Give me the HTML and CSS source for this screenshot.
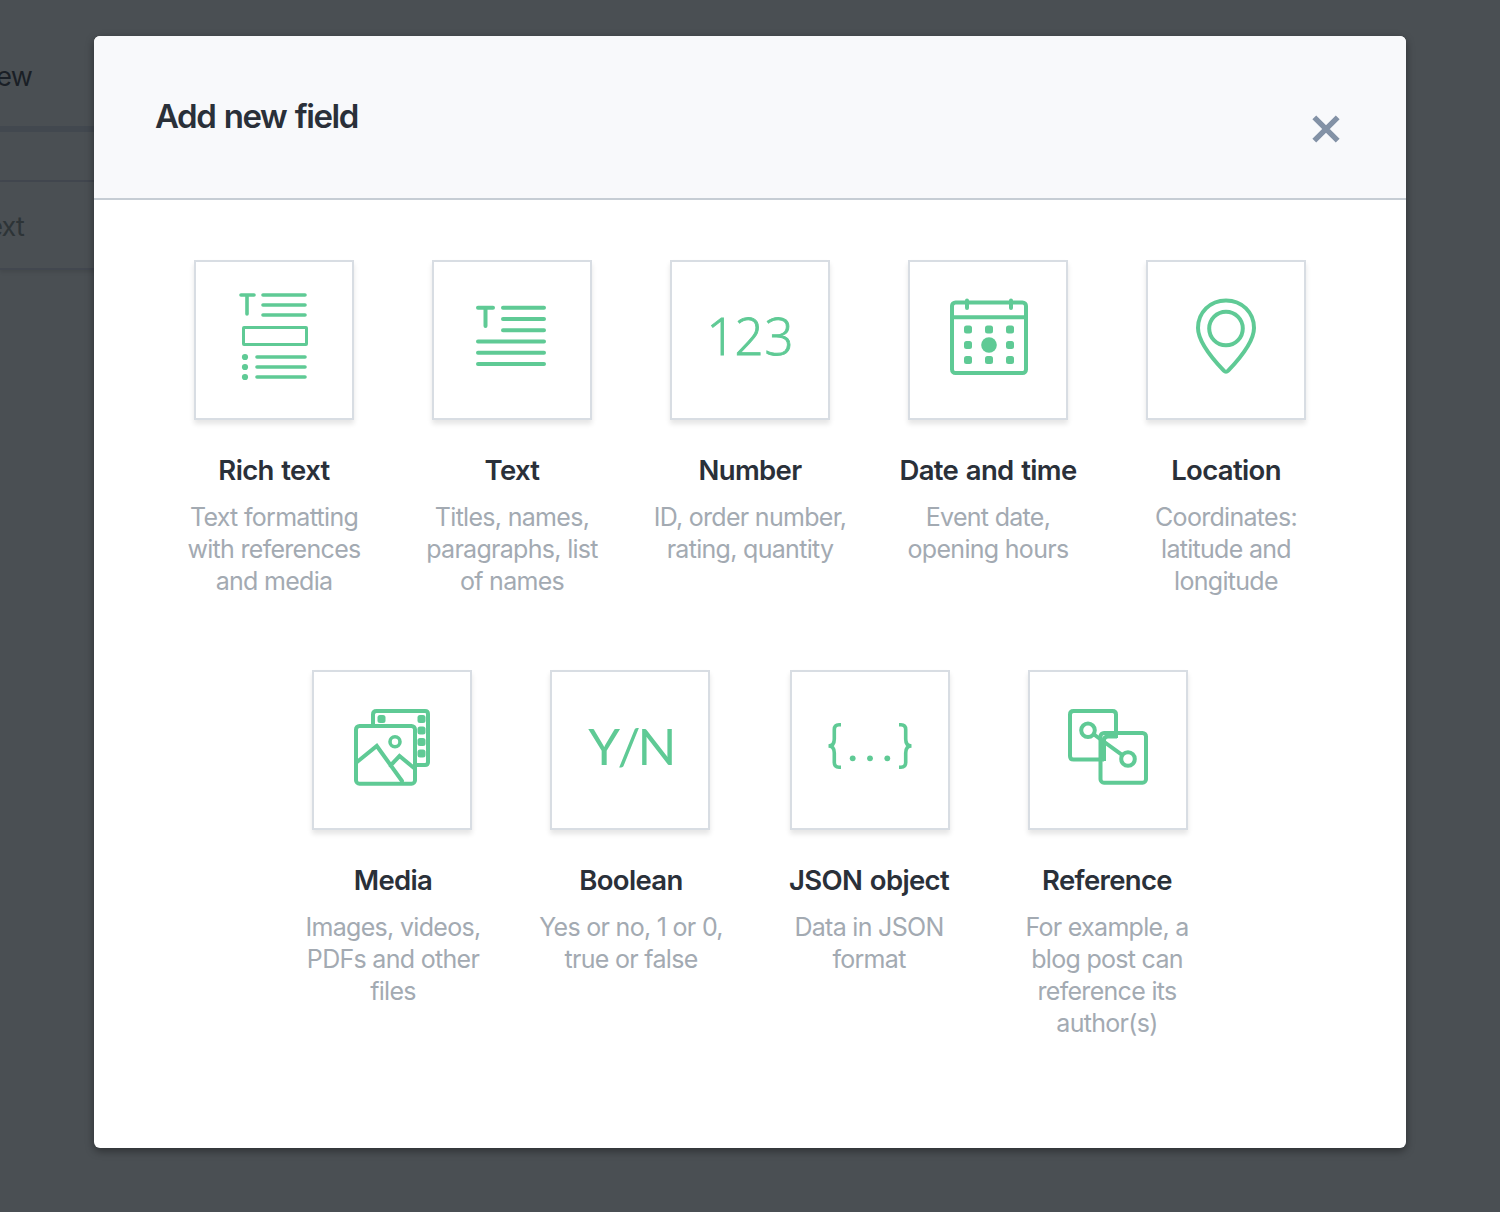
FILE: index.html
```html
<!DOCTYPE html>
<html lang="en">
<head>
<meta charset="utf-8">
<title>Add new field</title>
<link rel="stylesheet" href="styles.css">
</head>
<body>
<div class="screen">
  <div class="backdrop">
    <div class="bg-tab"><span>ew</span></div>
    <div class="bg-head"></div>
    <div class="bg-row"><span>ext</span></div>
  </div>
  <main class="modal">
    <header class="modal-header">
      <h1>Add new field</h1>
      <svg class="close" width="28" height="28" viewBox="0 0 28 28"><path d="M2.300 2.300L25.700 25.700M25.700 2.300L2.300 25.700"/></svg>
    </header>
    <div class="row">
      <section class="field">
        <div class="tile"><svg viewBox="0 0 156 156"><g class="s35"><path d="M45 33H58M51 33V52M67 33H109M67 43H109M67 53H109M61 95H109M61 105H109M61 115H109"/></g><rect class="s3" x="47.5" y="65.500" width="63" height="17" rx=".5"/><g class="fill"><circle cx="49" cy="95" r="3.100"/><circle cx="49" cy="105" r="3.100"/><circle cx="49" cy="115" r="3.100"/></g></svg></div>
        <h2>Rich text</h2>
        <p>Text formatting<br>with references<br>and media</p>
      </section>
      <section class="field">
        <div class="tile"><svg viewBox="0 0 156 156"><path d="M44 45.800H59M51.500 45.800V64M69 45.800H110M69 57H110M69 68.300H110M44 79.500H110M44 90.800H110M44 102H110"/></svg></div>
        <h2>Text</h2>
        <p>Titles, names,<br>paragraphs, list<br>of names</p>
      </section>
      <section class="field">
        <div class="tile"><svg viewBox="0 0 156 156"><text class="glyph digits" x="34.500 62.500 92.500" y="93" font-size="51">123</text></svg></div>
        <h2>Number</h2>
        <p>ID, order number,<br>rating, quantity</p>
      </section>
      <section class="field">
        <div class="tile"><svg viewBox="0 0 156 156"><rect x="42" y="40.500" width="74" height="70.500" rx="3.500"/><path d="M42 55.200H116M57 38.500V46M101 38.500V46"/><g class="fill"><rect x="54" y="63.500" width="8" height="8" rx="2.500"/><rect x="75" y="63.500" width="8" height="8" rx="2.500"/><rect x="96" y="63.500" width="8" height="8" rx="2.500"/><rect x="54" y="79" width="8" height="8" rx="2.500"/><rect x="96" y="79" width="8" height="8" rx="2.500"/><rect x="54" y="94" width="8" height="8" rx="2.500"/><rect x="75" y="94" width="8" height="8" rx="2.500"/><rect x="96" y="94" width="8" height="8" rx="2.500"/><circle cx="79" cy="83" r="7.800"/></g></svg></div>
        <h2>Date and time</h2>
        <p>Event date,<br>opening hours</p>
      </section>
      <section class="field">
        <div class="tile"><svg viewBox="0 0 156 156"><path d="M78 38.500C62 38.500 50 50.500 50 66C50 81 67.500 100 75.800 108.700Q78 111 80.200 108.700C88.500 100 106 81 106 66C106 50.500 94 38.500 78 38.500Z"/><circle cx="78" cy="66.500" r="16.800"/></svg></div>
        <h2>Location</h2>
        <p>Coordinates:<br>latitude and<br>longitude</p>
      </section>
    </div>
    <div class="row">
      <section class="field field-left">
        <div class="tile"><svg viewBox="0 0 156 156"><path d="M59 54V42.500Q59 39 62.500 39H111Q114 39 114 42V90Q114 93 111 93H102"/><rect x="42" y="54" width="59" height="57.700" rx="3.500"/><path d="M43 90L62.800 74L88 109M76.500 93.500L85.500 84L100 96"/><circle class="s35" cx="81" cy="69.800" r="5"/><g class="fill"><rect x="63.500" y="43" width="8" height="8" rx="2.500"/><rect x="103.500" y="43" width="8" height="8" rx="2.500"/><rect x="103.500" y="54.500" width="8" height="8" rx="2.500"/><rect x="103.500" y="66" width="8" height="8" rx="2.500"/><rect x="103.500" y="77.500" width="8" height="8" rx="2.500"/></g></svg></div>
        <h2>Media</h2>
        <p>Images, videos,<br>PDFs and other<br>files</p>
      </section>
      <section class="field field-left">
        <div class="tile"><svg viewBox="0 0 156 156"><text class="glyph letters" x="36.300 65.500 85.500" y="92.500" font-size="51">Y/N</text></svg></div>
        <h2>Boolean</h2>
        <p>Yes or no, 1 or 0,<br>true or false</p>
      </section>
      <section class="field field-right">
        <div class="tile"><svg viewBox="0 0 156 156"><path class="s35 butt" d="M49 52.700H47Q42.300 52.700 42.300 57.500V67Q42.300 74 36.500 74Q42.300 74 42.300 81V90.500Q42.300 95.200 47 95.200H49M107 52.700H109Q113.700 52.700 113.700 57.500V67Q113.700 74 119.500 74Q113.700 74 113.700 81V90.500Q113.700 95.200 109 95.200H107"/><g class="fill"><circle cx="60.700" cy="86.300" r="2.900"/><circle cx="78" cy="86.300" r="2.900"/><circle cx="95.300" cy="86.300" r="2.900"/></g></svg></div>
        <h2>JSON object</h2>
        <p>Data in JSON<br>format</p>
      </section>
      <section class="field field-right">
        <div class="tile"><svg viewBox="0 0 156 156"><path class="butt" d="M74 87.500H43.500Q40 87.500 40 84V42.500Q40 39 43.500 39H82.500Q86 39 86 42.500V66"/><rect x="70.500" y="61" width="45.500" height="49.700" rx="3.500"/><path class="butt" d="M87 64.500H78Q74 64.500 74 68V89"/><circle cx="58" cy="58.300" r="6.800"/><circle cx="98" cy="87" r="6.800"/><path d="M64 62.500L92 82.800"/></svg></div>
        <h2>Reference</h2>
        <p>For example, a<br>blog post can<br>reference its<br>author(s)</p>
      </section>
    </div>
  </main>
</div>
</body>
</html>
```
FILE: styles.css
```css
* { box-sizing: border-box; }

body {
  margin: 0;
  font-family: Inter, "Liberation Sans", sans-serif;
  background: #4a4f53;
}

.screen {
  display: grid;
  width: 1500px;
  height: 1212px;
  overflow: hidden;
}

.backdrop,
.modal { grid-area: 1 / 1; }

.backdrop {
  width: 120px;
  font-size: 27px;
  letter-spacing: -0.8px;
}

.bg-tab,
.bg-row {
  display: flex;
  align-items: center;
}

.bg-tab {
  height: 132px;
  padding-top: 27px;
  color: #1a1f26;
  border-bottom: 6px solid #42484f;
}

.bg-head {
  height: 50px;
  border-bottom: 2px solid #42474f;
}

.bg-row {
  height: 88px;
  padding-top: 2px;
  color: #2d3437;
  border-bottom: 2px solid #42474f;
  box-shadow: 0 2px 4px rgba(0, 0, 0, 0.1);
}

.bg-tab span,
.bg-row span {
  display: flex;
  justify-content: flex-end;
  width: 32px;
}

.bg-row span { width: 24px; }

.modal {
  width: 1312px;
  height: 1112px;
  margin: 36px 0 0 94px;
  background: #fff;
  border-radius: 6px;
  box-shadow: 0 3px 8px rgba(0, 0, 0, 0.4);
  overflow: hidden;
}

.modal-header {
  display: flex;
  justify-content: space-between;
  height: 164px;
  padding: 60px 66px 0 61px;
  background: #f8f9fb;
  border-bottom: 2px solid #c6cdd4;
}

h1 {
  margin: 0;
  font-size: 33px;
  line-height: 40px;
  font-weight: 600;
  letter-spacing: -1.45px;
  word-spacing: 1.5px;
  color: #2a3039;
}

.close {
  margin-top: 19px;
  stroke: #8392a6;
  stroke-width: 5.4;
  overflow: visible;
}

.row {
  display: flex;
  justify-content: center;
  height: 410px;
  padding-top: 60px;
}

.field {
  display: flex;
  flex-direction: column;
  align-items: center;
  width: 238px;
  text-align: center;
  white-space: nowrap;
}

.tile {
  flex: none;
  width: 160px;
  height: 160px;
  background: #fff;
  border: 2px solid #d8dde3;
  box-shadow: 0 4px 5px rgba(0, 0, 0, 0.1);
}

.field-left .tile { margin-right: 2px; }
.field-right .tile { margin-left: 2px; }

.tile svg {
  display: block;
  width: 156px;
  height: 156px;
  fill: none;
  stroke: #5fca95;
  stroke-width: 4;
  stroke-linecap: round;
}

.tile .s3 { stroke-width: 3; }
.tile .s35 { stroke-width: 3.6; }
.tile .butt { stroke-linecap: butt; }

.tile .fill,
.tile .glyph {
  fill: #5fca95;
  stroke: none;
}

.glyph {
  font-family: Lato, sans-serif;
  font-weight: 400;
}

.tile .digits {
  font-family: "Open Sans", sans-serif;
  font-weight: 300;
  stroke: #5fca95;
  stroke-width: 0.9;
}

h2 {
  margin: 34px 0 0;
  font-size: 27.5px;
  line-height: 32px;
  font-weight: 600;
  letter-spacing: -0.65px;
  word-spacing: 1.3px;
  color: #2a3039;
}

p {
  margin: 15px 0 0;
  font-size: 25px;
  line-height: 32px;
  letter-spacing: -0.7px;
  color: #a3aab2;
}
```
